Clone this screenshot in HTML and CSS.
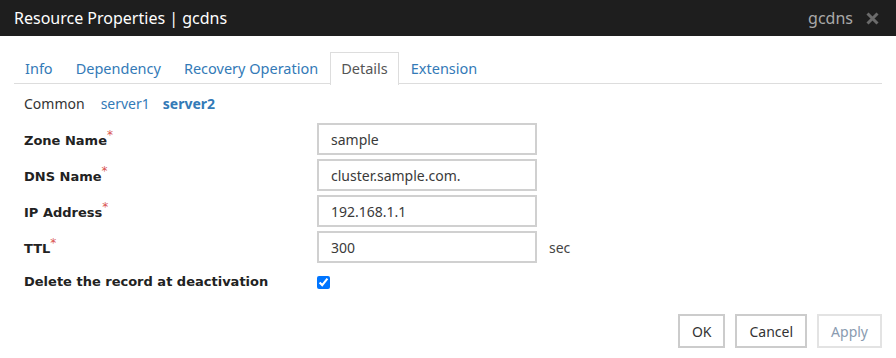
FILE: index.html
```html
<!DOCTYPE html>
<html lang="en">
<head>
    <meta charset="UTF-8">
    <title>Resource Properties | gcdns</title>
    <link rel="stylesheet" href="styles.css">
</head>
<body>
    <div class="dialog">
        <div class="dialog-header">
            <span class="dialog-title">Resource Properties | gcdns</span>
            <span class="header-right">
                <span class="header-name">gcdns</span>
                <svg class="close-icon" width="13" height="13" viewBox="0 0 13 13">
                    <path d="M1.5 1.5 L11.5 11.5 M11.5 1.5 L1.5 11.5" stroke="#6b6b6b" stroke-width="3" stroke-linecap="butt"/>
                </svg>
            </span>
        </div>

        <div class="dialog-body">
            <ul class="tabs">
                <li><a>Info</a></li>
                <li><a>Dependency</a></li>
                <li><a>Recovery Operation</a></li>
                <li class="active"><a>Details</a></li>
                <li><a>Extension</a></li>
            </ul>

            <div class="server-tabs">
                <span class="server-tab current">Common</span>
                <a class="server-tab">server1</a>
                <a class="server-tab selected">server2</a>
            </div>

            <div class="form">
                <div class="form-row">
                    <label class="form-label">Zone Name<span class="req">*</span></label>
                    <input class="form-input" type="text" value="sample">
                </div>
                <div class="form-row">
                    <label class="form-label">DNS Name<span class="req">*</span></label>
                    <input class="form-input" type="text" value="cluster.sample.com.">
                </div>
                <div class="form-row">
                    <label class="form-label">IP Address<span class="req">*</span></label>
                    <input class="form-input" type="text" value="192.168.1.1">
                </div>
                <div class="form-row">
                    <label class="form-label">TTL<span class="req">*</span></label>
                    <input class="form-input" type="text" value="300">
                    <span class="unit">sec</span>
                </div>
                <div class="form-row check-row">
                    <label class="form-label">Delete the record at deactivation</label>
                    <input class="form-check" type="checkbox" checked>
                </div>
            </div>

            <div class="dialog-footer">
                <button class="btn">OK</button>
                <button class="btn">Cancel</button>
                <button class="btn" disabled>Apply</button>
            </div>
        </div>
    </div>
</body>
</html>
```

FILE: styles.css
```css
:root {
    --header-bg: #1e1e1e;
    --link-color: #337ab7;
    --text-color: #333333;
    --border-color: #dddddd;
    --input-border: #cccccc;
    --required: #d9534f;
}

* {
    margin: 0;
    padding: 0;
    box-sizing: border-box;
}

body {
    font-family: 'Noto Sans', 'Open Sans', sans-serif;
    font-size: 14px;
    color: var(--text-color);
    background: #ffffff;
}

.dialog {
    width: 896px;
    height: 358px;
}

.dialog-header {
    height: 36px;
    background: var(--header-bg);
    display: flex;
    align-items: center;
    justify-content: space-between;
    padding: 0 17px 0 14px;
}

.dialog-title {
    color: #ffffff;
    font-size: 16px;
}

.header-right {
    display: flex;
    align-items: center;
    gap: 13px;
}

.header-name {
    color: #a9a9a9;
    font-size: 16px;
}

.dialog-body {
    padding: 16px 14px 0;
}

.tabs {
    list-style: none;
    display: flex;
    border-bottom: 1px solid var(--border-color);
    height: 32px;
}

.tabs li {
    margin-right: 1px;
}

.tabs a {
    display: block;
    height: 32px;
    padding: 5px 10px;
    color: var(--link-color);
    border: 1px solid transparent;
    border-bottom: none;
    font-size: 14.5px;
    cursor: pointer;
}

.tabs li.active a {
    color: #555555;
    border-color: var(--border-color);
    background: #ffffff;
    height: 33px;
}

.server-tabs {
    display: flex;
    align-items: center;
    height: 39px;
    padding-left: 10px;
}

.server-tab {
    margin-right: 13px;
    color: var(--link-color);
    cursor: pointer;
}

.server-tab.current {
    color: var(--text-color);
    margin-right: 16px;
}

.server-tab.selected {
    font-weight: 700;
}

.form {
    display: flex;
    flex-direction: column;
    gap: 4px;
}

.form-row {
    display: flex;
    align-items: center;
    height: 32px;
    padding-left: 10px;
}

.form-label {
    width: 293px;
    font-family: 'DejaVu Sans', sans-serif;
    font-weight: 700;
    font-size: 13px;
    color: #222222;
    margin-top: -2px;
}

.req {
    color: var(--required);
    font-weight: 400;
    font-size: 12px;
    vertical-align: 6px;
}

.form-input {
    width: 220px;
    height: 32px;
    border: 2px solid #d0d0d0;
    padding: 0 12px;
    font-family: inherit;
    font-size: 14px;
    color: #3a3a3a;
    outline: none;
}

.unit {
    margin-left: 12px;
    color: #444444;
}

.check-row {
    height: 30px;
}

.form-check {
    width: 13px;
    height: 13px;
    margin: 0;
    accent-color: #0075ff;
}

.dialog-footer {
    display: flex;
    justify-content: flex-end;
    gap: 10px;
    margin-top: 17px;
}

.btn {
    height: 34px;
    padding: 0 12px;
    background: #ffffff;
    border: 2px solid #cccccc;
    font-family: inherit;
    font-size: 14px;
    color: #333333;
    cursor: pointer;
}

.btn:disabled {
    border-color: #e3e3e3;
    color: #8a9bb0;
    cursor: default;
}
```
